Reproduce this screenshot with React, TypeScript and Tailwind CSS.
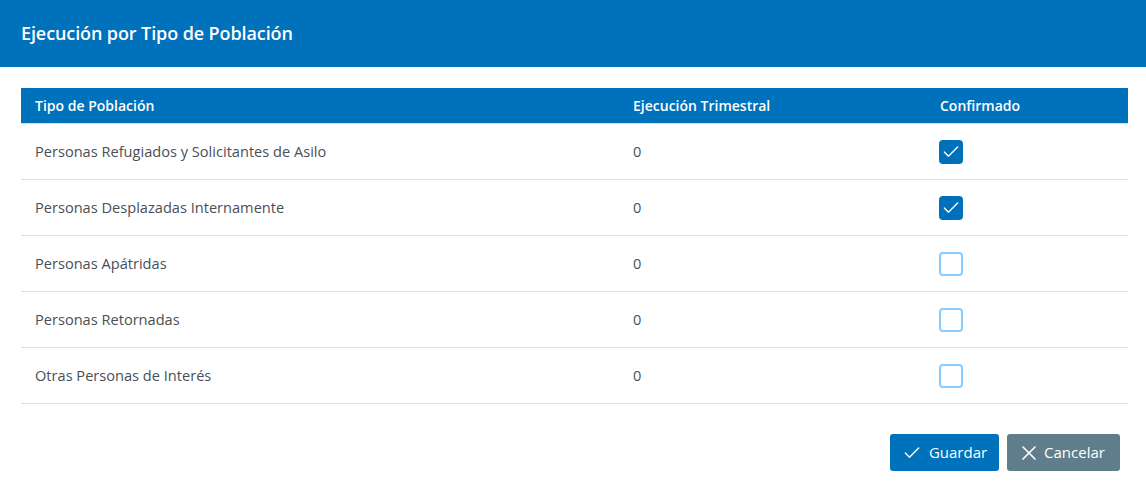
import { Check } from "lucide-react";

interface Row {
  tipo: string;
  ejecucion: number;
  confirmado: boolean;
}

const rows: Row[] = [
  { tipo: "Personas Refugiados y Solicitantes de Asilo", ejecucion: 0, confirmado: true },
  { tipo: "Personas Desplazadas Internamente", ejecucion: 0, confirmado: true },
  { tipo: "Personas Apátridas", ejecucion: 0, confirmado: false },
  { tipo: "Personas Retornadas", ejecucion: 0, confirmado: false },
  { tipo: "Otras Personas de Interés", ejecucion: 0, confirmado: false },
];

function Checkbox({ checked }: { checked: boolean }) {
  return checked ? (
    <div className="w-6 h-6 rounded-[4px] bg-[#0070ba] border-2 border-[#0070ba] flex items-center justify-center">
      <Check className="w-[22px] h-[22px] text-white" strokeWidth={1.6} />
    </div>
  ) : (
    <div className="w-6 h-6 rounded-[4px] bg-white border-2 border-[#87cdfb]" />
  );
}

export default function App() {
  return (
    <div className="w-[1146px] h-[487px] bg-white font-['Open_Sans',sans-serif] text-[#495057]">
      {/* Header */}
      <div className="h-[67px] bg-[#0071bb] flex items-center px-[21px]">
        <h1 className="text-[18px] font-semibold text-white tracking-[-0.1px]">Ejecución por Tipo de Población</h1>
      </div>

      <div className="px-[21px] pt-[21px]">
        {/* Table */}
        <div className="w-[1107px]">
          <div className="h-[36px] bg-[#0071bb] flex items-center text-white text-[14px] font-semibold border-b border-[#c3e4f8]">
            <div className="w-[598px] pl-[14px]">Tipo de Población</div>
            <div className="w-[307px] pl-[14px]">Ejecución Trimestral</div>
            <div className="flex-1 pl-[14px]">Confirmado</div>
          </div>
          {rows.map((r) => (
            <div key={r.tipo} className="h-[56px] flex items-center border-b border-[#c8e4f5] text-[14.6px]">
              <div className="w-[598px] pl-[14px]">{r.tipo}</div>
              <div className="w-[307px] pl-[14px]">{r.ejecucion}</div>
              <div className="flex-1 pl-[13px]">
                <Checkbox checked={r.confirmado} />
              </div>
            </div>
          ))}
        </div>

        {/* Actions */}
        <div className="flex justify-end gap-2 pt-[30px] pr-[5px]">
          <button className="h-[37px] w-[109px] rounded-[3px] bg-[#0071bb] text-white text-[15px] flex items-center justify-center gap-[7px]">
            <Check className="w-[20px] h-[20px]" strokeWidth={1.7} />
            Guardar
          </button>
          <button className="h-[37px] w-[113px] rounded-[3px] bg-[#607d8b] text-white text-[15px] flex items-center justify-center gap-[8px]">
            <svg width="14" height="14" viewBox="0 0 14 14" fill="none" stroke="currentColor" strokeWidth="1.6" strokeLinecap="round">
              <path d="M1 1 13 13M13 1 1 13" />
            </svg>
            Cancelar
          </button>
        </div>
      </div>
    </div>
  );
}
